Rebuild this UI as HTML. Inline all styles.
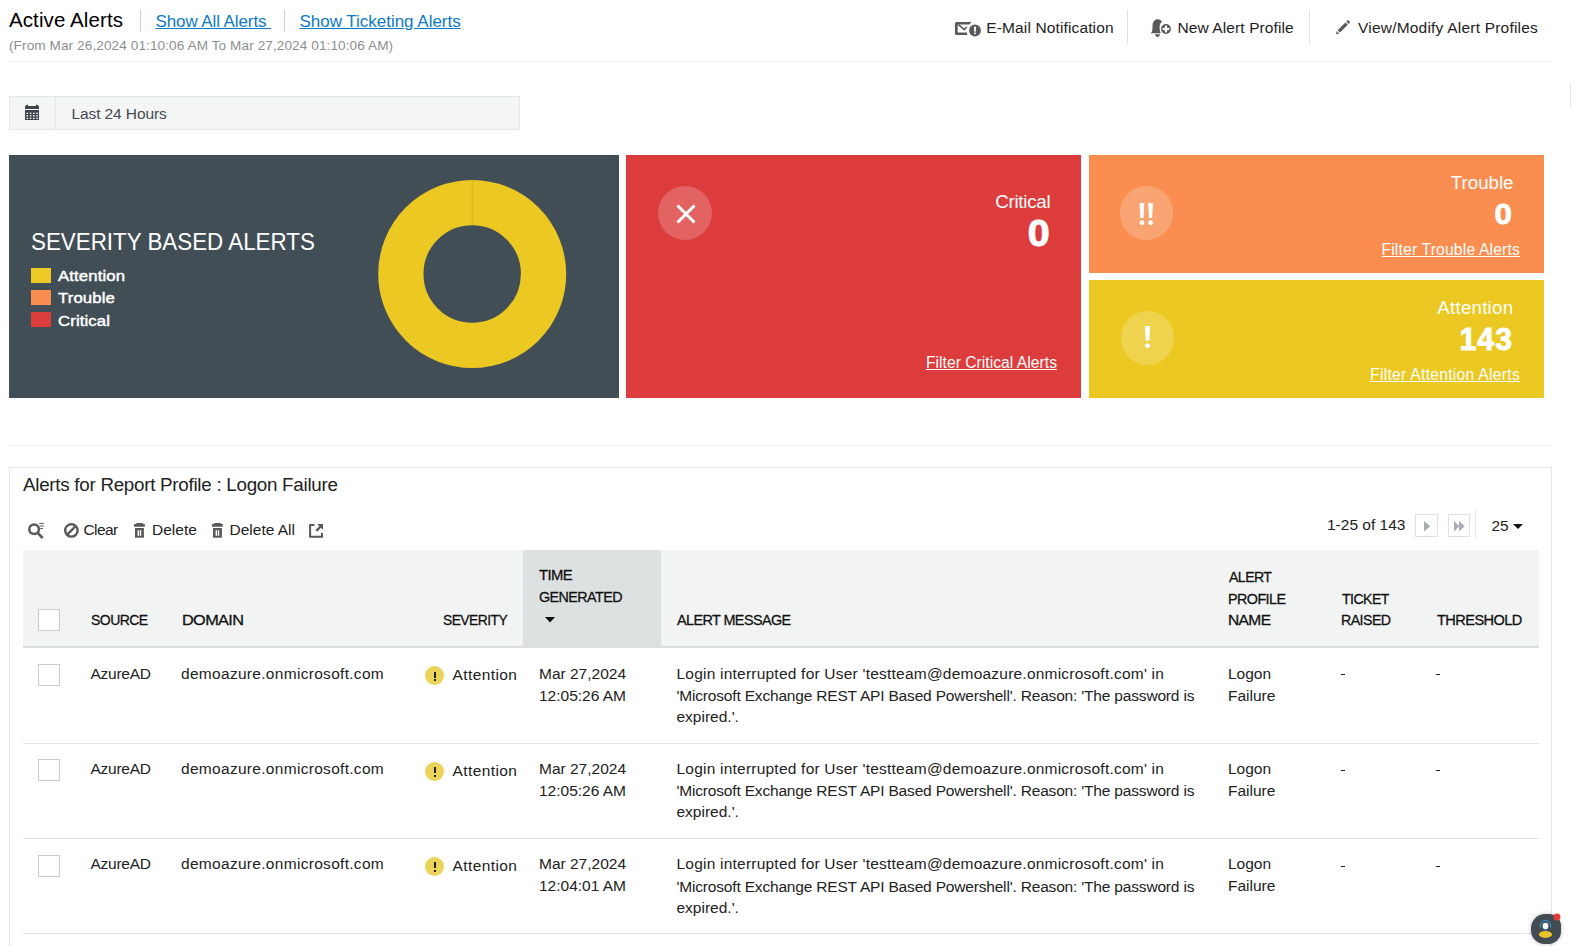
<!DOCTYPE html>
<html><head><meta charset="utf-8"><title>Active Alerts</title>
<style>
html,body{margin:0;padding:0;background:#fff;width:1577px;height:946px;overflow:hidden;position:relative}
.t{position:absolute;font-family:'Liberation Sans', sans-serif;line-height:normal;white-space:nowrap}
.r{position:absolute}
</style></head><body>
<div class="t" style="top:8.45px;font-size:20.5px;color:#000;letter-spacing:0.1px;left:9.00px;">Active Alerts</div>
<div class="r" style="left:140px;top:10px;width:1px;height:22px;background:#cfd2d3;"></div>
<div class="t" style="top:11.62px;font-size:17px;color:#0e7ac5;letter-spacing:-0.1px;text-decoration:underline;left:155.50px;">Show All Alerts&nbsp;</div>
<div class="r" style="left:284px;top:10px;width:1px;height:22px;background:#cfd2d3;"></div>
<div class="t" style="top:11.62px;font-size:17px;color:#0e7ac5;letter-spacing:-0.02px;text-decoration:underline;left:299.50px;">Show Ticketing Alerts</div>
<div class="t" style="top:38.09px;font-size:13.6px;color:#8c8f91;letter-spacing:0.09px;left:9.00px;">(From Mar 26,2024 01:10:06 AM To Mar 27,2024 01:10:06 AM)</div>
<div class="r" style="left:9px;top:61px;width:1543px;height:1px;background:#eef0f0;"></div>
<svg class="r" style="left:954px;top:21px" width="28" height="17" viewBox="0 0 28 17"><path d="M1 2.6 Q1 0.9 2.7 0.9 H17.6 L15.3 3.6 H3.7 V11.4 H13.2 V14.1 H2.7 Q1 14.1 1 12.4 Z" fill="#58595b"/>
<path d="M4.4 3.7 L10.3 8.6 L12.8 6" stroke="#58595b" stroke-width="1.6" fill="none"/>
<circle cx="21" cy="9.5" r="5.9" fill="#58595b"/>
<rect x="20.1" y="5.6" width="1.8" height="5" fill="#fff"/><rect x="20.1" y="11.6" width="1.8" height="1.5" fill="#fff"/></svg>
<div class="t" style="top:19.17px;font-size:15.5px;color:#222;letter-spacing:0.13px;left:986.30px;">E-Mail Notification</div>
<div class="r" style="left:1127px;top:10px;width:1px;height:34px;background:#dde3e3;"></div>
<svg class="r" style="left:1149px;top:18px" width="24" height="21" viewBox="0 0 24 21"><path d="M1.5 15.3 C3.5 13.8 3.5 12 3.5 8 C3.5 3.5 6 1.2 8.5 1.2 C11 1.2 12.5 2.6 13 3.8 C11.4 5 10.6 7 10.6 9.3 C10.6 11.8 11 13.5 11.8 15.3 Z" fill="#58595b"/>
<path d="M6 16.3 H11 Q10.6 19.2 8.5 19.2 Q6.4 19.2 6 16.3 Z" fill="#58595b"/>
<circle cx="17" cy="11" r="4.9" fill="#58595b"/>
<rect x="15.9" y="7.6" width="2.2" height="6.8" fill="#fff"/><rect x="13.6" y="9.9" width="6.8" height="2.2" fill="#fff"/></svg>
<div class="t" style="top:19.17px;font-size:15.5px;color:#222;letter-spacing:0.1px;left:1177.50px;">New Alert Profile</div>
<div class="r" style="left:1309px;top:10px;width:1px;height:34px;background:#dde3e3;"></div>
<svg class="r" style="left:1334px;top:19px" width="17" height="17" viewBox="0 0 17 17"><path d="M2 15.2 L2.8 12 L5.2 14.4 Z" fill="#58595b"/>
<path d="M3.6 11.2 L11.4 3.4 L13.8 5.8 L6 13.6 Z" fill="#58595b"/>
<path d="M12.2 2.6 L13.3 1.6 Q14.2 0.9 15.1 1.8 L15.6 2.3 Q16.4 3.2 15.6 4 L14.6 5 Z" fill="#58595b"/></svg>
<div class="t" style="top:19.17px;font-size:15.5px;color:#222;letter-spacing:0.21px;left:1358.00px;">View/Modify Alert Profiles</div>
<div class="r" style="left:9px;top:96px;width:511px;height:34px;background:#f4f5f5;box-sizing:border-box;border:1px solid #e2e7e7;"></div>
<div class="r" style="left:55px;top:97px;width:1px;height:32px;background:#e2e7e7;"></div>
<svg class="r" style="left:24px;top:103px" width="16" height="18" viewBox="0 0 16 18"><path d="M1 3 H15 V6 H1 Z" fill="#3d4449"/><rect x="2" y="1.8" width="2" height="2" fill="#3d4449"/><rect x="12" y="1.8" width="2" height="2" fill="#3d4449"/>
<path d="M1 7 H15 V17 H1 Z" fill="#3d4449"/>
<g fill="#f3f4f4">
<rect x="2.5" y="9.6" width="1.6" height="1.4"/><rect x="5.8" y="9.6" width="1.6" height="1.4"/><rect x="9" y="9.6" width="1.6" height="1.4"/><rect x="12.2" y="9.6" width="1.6" height="1.4"/>
<rect x="2.5" y="12" width="1.6" height="1.4"/><rect x="5.8" y="12" width="1.6" height="1.4"/><rect x="9" y="12" width="1.6" height="1.4"/><rect x="12.2" y="12" width="1.6" height="1.4"/>
<rect x="2.5" y="14.6" width="1.6" height="1.4"/><rect x="5.8" y="14.6" width="1.6" height="1.4"/><rect x="9" y="14.6" width="1.6" height="1.4"/><rect x="12.2" y="14.6" width="1.6" height="1.4"/>
</g></svg>
<div class="t" style="top:104.97px;font-size:15.5px;color:#464b4f;letter-spacing:-0.1px;left:71.50px;">Last 24 Hours</div>
<div class="r" style="left:9px;top:155px;width:610px;height:243px;background:#424e56;"></div>
<div class="t" style="top:227.83px;font-size:24.5px;color:#fff;left:31.00px;transform:scaleX(0.913);transform-origin:left center;">SEVERITY BASED ALERTS</div>
<div class="r" style="left:31px;top:268px;width:20px;height:15px;background:#eec826;"></div>
<div class="t" style="top:267.47px;font-size:15.5px;color:#fff;letter-spacing:0.1px;left:57.50px;transform:scaleX(1.08);transform-origin:left center;-webkit-text-stroke:0.45px #fff;">Attention</div>
<div class="r" style="left:31px;top:290px;width:20px;height:15px;background:#f98e50;"></div>
<div class="t" style="top:289.47px;font-size:15.5px;color:#fff;letter-spacing:0.1px;left:57.50px;transform:scaleX(1.08);transform-origin:left center;-webkit-text-stroke:0.45px #fff;">Trouble</div>
<div class="r" style="left:31px;top:312px;width:20px;height:15px;background:#dc3d3d;"></div>
<div class="t" style="top:311.97px;font-size:15.5px;color:#fff;letter-spacing:0.1px;left:57.50px;transform:scaleX(1.08);transform-origin:left center;-webkit-text-stroke:0.45px #fff;">Critical</div>
<svg class="r" style="left:372px;top:174px" width="200" height="200" viewBox="0 0 200 200"><circle cx="100.2" cy="100" r="71.35" fill="none" stroke="#ecc823" stroke-width="45.3"/>
<line x1="100.2" y1="6" x2="100.2" y2="51" stroke="#b89c2a" stroke-width="0.5"/></svg>
<div class="r" style="left:626px;top:155px;width:455px;height:243px;background:#dc3c3c;"></div>
<div class="r" style="left:658px;top:186px;width:54px;height:54px;border-radius:50%;background:rgba(255,255,255,0.2)"></div>
<svg class="r" style="left:675px;top:203px" width="22" height="22" viewBox="0 0 22 22"><path d="M2.5 2.5 L19.5 19.5 M19.5 2.5 L2.5 19.5" stroke="#fff" stroke-width="3"/></svg>
<div class="t" style="top:191.08px;font-size:18.7px;color:#fff;letter-spacing:-0.25px;right:526.70px;text-align:right;">Critical</div>
<div class="t" style="top:211.93px;font-size:37.2px;color:#fff;font-weight:bold;right:527.00px;text-align:right;transform:scaleX(1.06);transform-origin:right center;-webkit-text-stroke:1px #fff;">0</div>
<div class="t" style="top:353.58px;font-size:15.6px;color:#fff;letter-spacing:0.05px;text-decoration:underline;right:520.00px;text-align:right;">Filter Critical Alerts</div>
<div class="r" style="left:1089px;top:155px;width:455px;height:118px;background:#f98e50;"></div>
<div class="r" style="left:1119.5px;top:186px;width:53.5px;height:53.5px;border-radius:50%;background:rgba(255,255,255,0.2)"></div>
<svg class="r" style="left:1138px;top:202px" width="16" height="25" viewBox="0 0 16 25"><path d="M1.6 1 H6.3 L5.5 16 H2.4 Z M10.2 1 H14.9 L14.1 16 H11 Z" fill="#fff"/><rect x="1.6" y="18.2" width="4.7" height="4.8" rx="2.3" fill="#fff"/><rect x="10.2" y="18.2" width="4.7" height="4.8" rx="2.3" fill="#fff"/></svg>
<div class="t" style="top:171.98px;font-size:18.7px;color:#fff;right:63.50px;text-align:right;">Trouble</div>
<div class="t" style="top:197.08px;font-size:30.3px;color:#fff;font-weight:bold;right:65.00px;text-align:right;transform:scaleX(1.03);transform-origin:right center;-webkit-text-stroke:0.9px #fff;">0</div>
<div class="t" style="top:240.78px;font-size:15.6px;color:#fff;letter-spacing:0.2px;text-decoration:underline;right:57.00px;text-align:right;">Filter Trouble Alerts</div>
<div class="r" style="left:1089px;top:280px;width:455px;height:118px;background:#ebc822;"></div>
<div class="r" style="left:1120.5px;top:311px;width:53.5px;height:53.5px;border-radius:50%;background:rgba(255,255,255,0.2)"></div>
<svg class="r" style="left:1140px;top:326px" width="15" height="25" viewBox="0 0 15 25"><path d="M4.9 0 H10.1 L9.4 14.8 H5.7 Z" fill="#fff"/><rect x="5" y="17.5" width="5.1" height="4.4" rx="2.1" fill="#fff"/></svg>
<div class="t" style="top:296.78px;font-size:18.7px;color:#fff;letter-spacing:0.25px;right:63.70px;text-align:right;">Attention</div>
<div class="t" style="top:321.94px;font-size:31px;color:#fff;font-weight:bold;letter-spacing:1.2px;right:63.80px;text-align:right;transform:scaleX(0.975);transform-origin:right center;-webkit-text-stroke:0.9px #fff;">143</div>
<div class="t" style="top:365.98px;font-size:15.6px;color:#fff;letter-spacing:0.3px;text-decoration:underline;right:57.00px;text-align:right;">Filter Attention Alerts</div>
<div class="r" style="left:9px;top:445px;width:1543px;height:1px;background:#eef0f0;"></div>
<div class="r" style="left:9px;top:467px;width:1543px;height:500px;box-sizing:border-box;border:1px solid #e1e6e6;"></div>
<div class="t" style="top:473.89px;font-size:18.8px;color:#222;letter-spacing:-0.27px;left:23.00px;">Alerts for Report Profile : Logon Failure</div>
<svg class="r" style="left:26px;top:521px" width="20" height="20" viewBox="0 0 20 20"><circle cx="8.1" cy="8.2" r="4.8" fill="none" stroke="#58595b" stroke-width="2.5"/>
<path d="M11.6 11.9 L16.7 17" stroke="#58595b" stroke-width="2.6"/>
<path d="M13.2 2.4 H17.8 M13.6 5 H17.8 M14.2 7.5 H17" stroke="#58595b" stroke-width="1"/></svg>
<svg class="r" style="left:62px;top:521px" width="19" height="19" viewBox="0 0 19 19"><circle cx="9.4" cy="9.4" r="6.2" fill="none" stroke="#58595b" stroke-width="2.4"/>
<path d="M13.6 5.2 L5.2 13.6" stroke="#58595b" stroke-width="2.4"/></svg>
<div class="t" style="top:520.67px;font-size:15.5px;color:#222;letter-spacing:-0.6px;left:83.50px;">Clear</div>
<svg class="r" style="left:133px;top:522px" width="13" height="17" viewBox="0 0 13 17"><path d="M1 2.1 H3.3 V1 H9.9 V2.1 H11.8 V4.7 H1 Z" fill="#58595b"/>
<path d="M2 6 H10.9 V15.7 H2 Z" fill="#58595b"/><rect x="4.6" y="8.2" width="1.4" height="5.6" fill="#fff"/><rect x="6.8" y="8.2" width="1.4" height="5.6" fill="#fff"/></svg>
<div class="t" style="top:520.67px;font-size:15.5px;color:#222;left:152.00px;">Delete</div>
<svg class="r" style="left:211px;top:522px" width="13" height="17" viewBox="0 0 13 17"><path d="M1 2.1 H3.3 V1 H9.9 V2.1 H11.8 V4.7 H1 Z" fill="#58595b"/>
<path d="M2 6 H10.9 V15.7 H2 Z" fill="#58595b"/><rect x="4.6" y="8.2" width="1.4" height="5.6" fill="#fff"/><rect x="6.8" y="8.2" width="1.4" height="5.6" fill="#fff"/></svg>
<div class="t" style="top:520.67px;font-size:15.5px;color:#222;left:229.50px;">Delete All</div>
<svg class="r" style="left:309px;top:524px" width="16" height="15" viewBox="0 0 16 15"><path d="M5.5 0.9 H1.1 V12.7 H13 V9" fill="none" stroke="#58595b" stroke-width="2"/>
<path d="M7.3 6.8 L11.6 2.5" stroke="#58595b" stroke-width="2.4"/>
<path d="M8.1 0 H14 V5.7 Z" fill="#58595b"/></svg>
<div class="t" style="top:515.97px;font-size:15.5px;color:#222;left:1327.00px;">1-25 of 143</div>
<div class="r" style="left:1415px;top:514px;width:23px;height:23px;box-sizing:border-box;border:1px solid #dde1e2;"></div>
<svg class="r" style="left:1423px;top:520px" width="9" height="13" viewBox="0 0 9 13"><path d="M1 1 L7.2 6.3 L1 11.6 Z" fill="#a8adb0"/></svg>
<div class="r" style="left:1448px;top:514px;width:22px;height:23px;box-sizing:border-box;border:1px solid #dde1e2;"></div>
<svg class="r" style="left:1453px;top:520px" width="13" height="13" viewBox="0 0 13 13"><path d="M1 1 L6.3 6.3 L1 11.6 Z M6 1 L11.8 6.3 L6 11.6 Z" fill="#a8adb0"/></svg>
<div class="r" style="left:1475px;top:509px;width:1px;height:30px;background:#e3e7e7;"></div>
<div class="t" style="top:516.87px;font-size:15.5px;color:#222;left:1491.50px;">25</div>
<svg class="r" style="left:1512px;top:523px" width="12" height="7" viewBox="0 0 12 7"><path d="M1 1 H11 L6 6 Z" fill="#111"/></svg>
<div class="r" style="left:23px;top:550px;width:1516px;height:96px;background:#f2f3f3;"></div>
<div class="r" style="left:523px;top:550px;width:138px;height:96px;background:#dde1e2;"></div>
<div class="r" style="left:23px;top:646px;width:1516px;height:2px;background:#dcdfe0;"></div>
<div class="r" style="left:38px;top:609px;width:22px;height:22px;box-sizing:border-box;border:1px solid #c9cccd;background:#fff"></div>
<div class="t" style="top:611.47px;font-size:15.5px;color:#111;letter-spacing:-0.6px;left:90.50px;transform:scaleX(0.903);transform-origin:left center;-webkit-text-stroke:0.3px #111;">SOURCE</div>
<div class="t" style="top:611.47px;font-size:15.5px;color:#111;letter-spacing:-0.6px;left:181.50px;transform:scaleX(1.05);transform-origin:left center;-webkit-text-stroke:0.3px #111;">DOMAIN</div>
<div class="t" style="top:611.47px;font-size:15.5px;color:#111;letter-spacing:-0.6px;left:442.50px;transform:scaleX(0.892);transform-origin:left center;-webkit-text-stroke:0.3px #111;">SEVERITY</div>
<div class="t" style="top:566.47px;font-size:15.5px;color:#111;letter-spacing:-0.6px;left:539.00px;transform:scaleX(0.956);transform-origin:left center;-webkit-text-stroke:0.3px #111;">TIME</div>
<div class="t" style="top:588.47px;font-size:15.5px;color:#111;letter-spacing:-0.6px;left:539.00px;transform:scaleX(0.923);transform-origin:left center;-webkit-text-stroke:0.3px #111;">GENERATED</div>
<svg class="r" style="left:544px;top:616px" width="12" height="8" viewBox="0 0 12 8"><path d="M1 1 H11 L6 6.5 Z" fill="#111"/></svg>
<div class="t" style="top:611.47px;font-size:15.5px;color:#111;letter-spacing:-0.6px;left:676.50px;transform:scaleX(0.927);transform-origin:left center;-webkit-text-stroke:0.3px #111;">ALERT MESSAGE</div>
<div class="t" style="top:568.17px;font-size:15.5px;color:#111;letter-spacing:-0.6px;left:1228.50px;transform:scaleX(0.909);transform-origin:left center;-webkit-text-stroke:0.3px #111;">ALERT</div>
<div class="t" style="top:589.97px;font-size:15.5px;color:#111;letter-spacing:-0.6px;left:1228.00px;transform:scaleX(0.925);transform-origin:left center;-webkit-text-stroke:0.3px #111;">PROFILE</div>
<div class="t" style="top:611.47px;font-size:15.5px;color:#111;letter-spacing:-0.6px;left:1228.00px;transform:scaleX(1.002);transform-origin:left center;-webkit-text-stroke:0.3px #111;">NAME</div>
<div class="t" style="top:589.97px;font-size:15.5px;color:#111;letter-spacing:-0.6px;left:1341.50px;transform:scaleX(0.909);transform-origin:left center;-webkit-text-stroke:0.3px #111;">TICKET</div>
<div class="t" style="top:611.47px;font-size:15.5px;color:#111;letter-spacing:-0.6px;left:1341.00px;transform:scaleX(0.916);transform-origin:left center;-webkit-text-stroke:0.3px #111;">RAISED</div>
<div class="t" style="top:611.47px;font-size:15.5px;color:#111;letter-spacing:-0.6px;left:1436.50px;transform:scaleX(0.94);transform-origin:left center;-webkit-text-stroke:0.3px #111;">THRESHOLD</div>
<div class="r" style="left:38px;top:664px;width:22px;height:22px;box-sizing:border-box;border:1px solid #c9cccd;background:#fff"></div>
<div class="t" style="top:664.57px;font-size:15.5px;color:#222;letter-spacing:-0.25px;left:90.50px;">AzureAD</div>
<div class="t" style="top:664.57px;font-size:15.5px;color:#222;letter-spacing:0.3px;left:181.00px;">demoazure.onmicrosoft.com</div>
<div class="r" style="left:424.8px;top:666.30px;width:19.2px;height:19.2px;border-radius:50%;background:#ecd45b"></div>
<div class="r" style="left:433.5px;top:672px;width:2.0px;height:6px;background:#1e2023;"></div>
<div class="r" style="left:433.5px;top:679px;width:2.0px;height:2px;background:#1e2023;"></div>
<div class="t" style="top:666.17px;font-size:15.5px;color:#222;letter-spacing:0.4px;left:452.50px;">Attention</div>
<div class="t" style="top:664.57px;font-size:15.5px;color:#222;left:539.00px;">Mar 27,2024</div>
<div class="t" style="top:686.77px;font-size:15.5px;color:#222;left:539.00px;">12:05:26 AM</div>
<div class="t" style="top:664.77px;font-size:15.5px;color:#222;letter-spacing:0.22px;left:676.50px;">Login interrupted for User 'testteam@demoazure.onmicrosoft.com' in</div>
<div class="t" style="top:686.87px;font-size:15.5px;color:#222;letter-spacing:-0.18px;left:676.50px;">'Microsoft Exchange REST API Based Powershell'. Reason: 'The password is</div>
<div class="t" style="top:707.97px;font-size:15.5px;color:#222;left:676.50px;">expired.'.</div>
<div class="t" style="top:664.77px;font-size:15.5px;color:#222;left:1228.00px;">Logon</div>
<div class="t" style="top:686.67px;font-size:15.5px;color:#222;left:1228.00px;">Failure</div>
<div class="r" style="left:1341px;top:674px;width:4px;height:1px;background:#222;"></div>
<div class="r" style="left:1436px;top:674px;width:4px;height:1px;background:#222;"></div>
<div class="r" style="left:38px;top:759px;width:22px;height:22px;box-sizing:border-box;border:1px solid #c9cccd;background:#fff"></div>
<div class="t" style="top:759.97px;font-size:15.5px;color:#222;letter-spacing:-0.25px;left:90.50px;">AzureAD</div>
<div class="t" style="top:759.97px;font-size:15.5px;color:#222;letter-spacing:0.3px;left:181.00px;">demoazure.onmicrosoft.com</div>
<div class="r" style="left:424.8px;top:761.70px;width:19.2px;height:19.2px;border-radius:50%;background:#ecd45b"></div>
<div class="r" style="left:433.5px;top:767px;width:2.0px;height:6px;background:#1e2023;"></div>
<div class="r" style="left:433.5px;top:775px;width:2.0px;height:2px;background:#1e2023;"></div>
<div class="t" style="top:761.57px;font-size:15.5px;color:#222;letter-spacing:0.4px;left:452.50px;">Attention</div>
<div class="t" style="top:759.97px;font-size:15.5px;color:#222;left:539.00px;">Mar 27,2024</div>
<div class="t" style="top:782.17px;font-size:15.5px;color:#222;left:539.00px;">12:05:26 AM</div>
<div class="t" style="top:760.17px;font-size:15.5px;color:#222;letter-spacing:0.22px;left:676.50px;">Login interrupted for User 'testteam@demoazure.onmicrosoft.com' in</div>
<div class="t" style="top:782.27px;font-size:15.5px;color:#222;letter-spacing:-0.18px;left:676.50px;">'Microsoft Exchange REST API Based Powershell'. Reason: 'The password is</div>
<div class="t" style="top:803.37px;font-size:15.5px;color:#222;left:676.50px;">expired.'.</div>
<div class="t" style="top:760.17px;font-size:15.5px;color:#222;left:1228.00px;">Logon</div>
<div class="t" style="top:782.07px;font-size:15.5px;color:#222;left:1228.00px;">Failure</div>
<div class="r" style="left:1341px;top:770px;width:4px;height:1px;background:#222;"></div>
<div class="r" style="left:1436px;top:770px;width:4px;height:1px;background:#222;"></div>
<div class="r" style="left:38px;top:855px;width:22px;height:22px;box-sizing:border-box;border:1px solid #c9cccd;background:#fff"></div>
<div class="t" style="top:855.27px;font-size:15.5px;color:#222;letter-spacing:-0.25px;left:90.50px;">AzureAD</div>
<div class="t" style="top:855.27px;font-size:15.5px;color:#222;letter-spacing:0.3px;left:181.00px;">demoazure.onmicrosoft.com</div>
<div class="r" style="left:424.8px;top:857.00px;width:19.2px;height:19.2px;border-radius:50%;background:#ecd45b"></div>
<div class="r" style="left:433.5px;top:862px;width:2.0px;height:6px;background:#1e2023;"></div>
<div class="r" style="left:433.5px;top:870px;width:2.0px;height:2px;background:#1e2023;"></div>
<div class="t" style="top:856.87px;font-size:15.5px;color:#222;letter-spacing:0.4px;left:452.50px;">Attention</div>
<div class="t" style="top:855.27px;font-size:15.5px;color:#222;left:539.00px;">Mar 27,2024</div>
<div class="t" style="top:877.47px;font-size:15.5px;color:#222;left:539.00px;">12:04:01 AM</div>
<div class="t" style="top:855.47px;font-size:15.5px;color:#222;letter-spacing:0.22px;left:676.50px;">Login interrupted for User 'testteam@demoazure.onmicrosoft.com' in</div>
<div class="t" style="top:877.57px;font-size:15.5px;color:#222;letter-spacing:-0.18px;left:676.50px;">'Microsoft Exchange REST API Based Powershell'. Reason: 'The password is</div>
<div class="t" style="top:898.67px;font-size:15.5px;color:#222;left:676.50px;">expired.'.</div>
<div class="t" style="top:855.47px;font-size:15.5px;color:#222;left:1228.00px;">Logon</div>
<div class="t" style="top:877.37px;font-size:15.5px;color:#222;left:1228.00px;">Failure</div>
<div class="r" style="left:1341px;top:866px;width:4px;height:1px;background:#222;"></div>
<div class="r" style="left:1436px;top:866px;width:4px;height:1px;background:#222;"></div>
<div class="r" style="left:23px;top:743px;width:1516px;height:1px;background:#dfe3e3;"></div>
<div class="r" style="left:23px;top:838px;width:1516px;height:1px;background:#dfe3e3;"></div>
<div class="r" style="left:23px;top:933px;width:1516px;height:1px;background:#dfe3e3;"></div>
<div class="r" style="left:1570px;top:83px;width:1px;height:25px;background:#e3e8e8;"></div>
<div class="r" style="left:1531px;top:914px;width:30px;height:30px;border-radius:48% 40% 42% 46%;background:#434b53;box-shadow:0 0 4px rgba(0,0,0,0.25)"></div>
<svg class="r" style="left:1531px;top:912px" width="32" height="34" viewBox="0 0 32 34"><ellipse cx="14.5" cy="14" rx="2.9" ry="3.3" fill="#fff"/>
<path d="M9.6 15.5 A5.2 5.2 0 1 1 19.4 15.5" stroke="#2aa3e6" stroke-width="1" fill="none"/>
<circle cx="14.5" cy="17.8" r="0.9" fill="#2aa3e6"/>
<ellipse cx="14.5" cy="22.4" rx="6.6" ry="3.5" fill="#e9c52b"/>
<circle cx="26" cy="5" r="3.4" fill="#e53935"/></svg>
</body></html>
